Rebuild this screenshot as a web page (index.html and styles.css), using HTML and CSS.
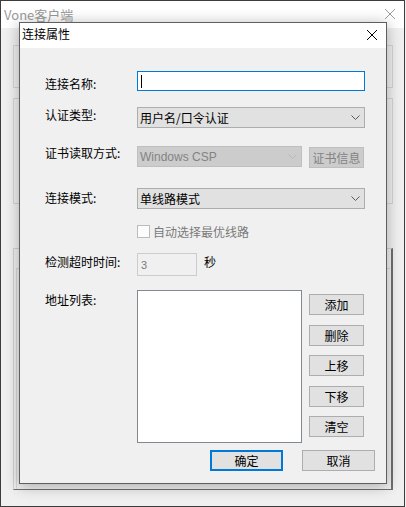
FILE: index.html
```html
<!DOCTYPE html>
<html lang="zh-CN">
<head>
<meta charset="utf-8">
<title>连接属性</title>
<link rel="stylesheet" href="styles.css">
</head>
<body>
<div class="app">
  <div class="app-titlebar">
    <span class="app-title">Vone客户端</span>
    <svg class="app-close" width="10" height="10" viewBox="0 0 10 10"><path d="M0 0L10 10M10 0L0 10" stroke="#9a9a9a" stroke-width="1" fill="none"/></svg>
  </div>
  <div class="app-body">
    <div class="group g1"></div>
    <div class="group g2"></div>
    <div class="group g3"><div class="g3-inner"></div></div>
  </div>

  <div class="dialog">
    <div class="dlg-titlebar">
      <span class="dlg-title">连接属性</span>
      <svg class="dlg-close" width="10" height="10" viewBox="0 0 10 10"><path d="M0 0L10 10M10 0L0 10" stroke="#000" stroke-width="1" fill="none"/></svg>
    </div>
    <div class="dlg-body">
      <div class="row r1">
        <span class="lbl off7">连接名称:</span>
        <div class="field text-input focused"><span class="caret"></span></div>
      </div>
      <div class="row r2">
        <span class="lbl off2">认证类型:</span>
        <div class="field combo wide"><span class="combo-text">用户名/口令认证</span><svg class="chev" width="9" height="5" viewBox="0 0 9 5"><path d="M0.5 0.5L4.5 4.5L8.5 0.5" stroke="#5a5a5a" fill="none"/></svg></div>
      </div>
      <div class="row r3">
        <span class="lbl off1">证书读取方式:</span>
        <div class="field combo narrow disabled"><span class="combo-text">Windows CSP</span><svg class="chev" width="9" height="5" viewBox="0 0 9 5"><path d="M0.5 0.5L4.5 4.5L8.5 0.5" stroke="#b8b8b8" fill="none"/></svg></div>
        <div class="btn side disabled cert">证书信息</div>
      </div>
      <div class="row r4">
        <span class="lbl off4">连接模式:</span>
        <div class="field combo wide"><span class="combo-text">单线路模式</span><svg class="chev" width="9" height="5" viewBox="0 0 9 5"><path d="M0.5 0.5L4.5 4.5L8.5 0.5" stroke="#5a5a5a" fill="none"/></svg></div>
      </div>
      <div class="row r5">
        <span class="lbl"></span>
        <span class="checkbox"></span>
        <span class="check-text">自动选择最优线路</span>
      </div>
      <div class="row r6">
        <span class="lbl off3">检测超时时间:</span>
        <div class="field timeout"><span class="timeout-val">3</span></div>
        <span class="unit">秒</span>
      </div>
      <div class="row r7">
        <span class="lbl off4">地址列表:</span>
        <div class="listbox"></div>
        <div class="side-buttons">
          <div class="btn side">添加</div>
          <div class="btn side">删除</div>
          <div class="btn side">上移</div>
          <div class="btn side">下移</div>
          <div class="btn side">清空</div>
        </div>
      </div>
      <div class="row r8">
        <div class="btn action default">确定</div>
        <div class="btn action">取消</div>
      </div>
    </div>
  </div>
</div>
</body>
</html>
```

FILE: styles.css
```css
* { box-sizing: border-box; }
html, body { margin: 0; padding: 0; }
body {
  width: 406px;
  height: 507px;
  overflow: hidden;
  background: #f0f0f0;
  font-family: "Noto Sans CJK SC", "Noto Sans", sans-serif;
  font-size: 12px;
  line-height: 12px;
  color: #000;
}

/* parent window */
.app {
  position: relative;
  width: 405px;
  height: 507px;
  border: 1px solid #3d3d3d;
  background: #f0f0f0;
  display: flex;
  flex-direction: column;
}
.app-titlebar {
  height: 27px;
  background: #fff;
  display: flex;
  align-items: flex-start;
  padding: 7px 0 0 3px;
}
.app-title {
  font-size: 13px;
  line-height: 13px;
  color: #9a9a9a;
  flex: 1;
}
.app-close { margin: 1px 9px 0 0; }
.app-body {
  flex: 1;
  padding: 17px 0 0 12px;
  display: flex;
  flex-direction: column;
}
.group {
  width: 380px;
  border: 1px solid #d6d6d6;
}
.g1 { height: 43px; }
.g2 { height: 106px; margin-top: 10px; }
.g3 {
  height: 242px;
  margin-top: 44px;
  border-color: #d2d2d2 #6f6f6f #6f6f6f #d2d2d2;
  border-right-width: 2px;
  padding: 19px 1px 0 2px;
}
.g3-inner {
  height: 100%;
  border-top: 1px solid #d8d8d8;
  border-left: 1px solid #d8d8d8;
}

/* dialog */
.dialog {
  position: absolute;
  left: 18px;
  top: 21px;
  width: 368px;
  height: 462px;
  border: 1px solid #5f5f5f;
  background: #f0f0f0;
  box-shadow: 0 2px 14px rgba(0, 0, 0, 0.3);
  display: flex;
  flex-direction: column;
}
.dlg-titlebar {
  height: 25px;
  background: #fff;
  display: flex;
  align-items: flex-start;
  padding: 5px 0 0 2px;
}
.dlg-title { flex: 1; }
.dlg-close { margin: 2px 9px 0 0; shape-rendering: crispEdges; }
.dlg-body {
  flex: 1;
  padding: 23px 0 0 25px;
  display: flex;
  flex-direction: column;
}

.row { display: flex; align-items: flex-start; }
.r2 { margin-top: 16px; }
.r3 { margin-top: 18px; }
.r4 { margin-top: 20px; }
.r5 { margin-top: 16px; }
.r6 { margin-top: 15px; }
.r7 { margin-top: 14px; }
.r8 { margin-top: 7px; justify-content: flex-end; padding-right: 11px; gap: 19px; }

.lbl { width: 92px; flex: none; white-space: nowrap; }
.off1 { margin-top: 1px; }
.off2 { margin-top: 2px; }
.off3 { margin-top: 3px; }
.off4 { margin-top: 4px; }
.off7 { margin-top: 7px; }

.field { flex: none; border: 1px solid #adadad; display: flex; align-items: center; }
.text-input {
  width: 228px;
  height: 20px;
  background: #fff;
  padding-left: 3px;
}
.text-input.focused { border-color: #0078d7; }
.caret { width: 1px; height: 13px; background: #000; }

.combo {
  height: 21px;
  background: #e1e1e1;
  padding: 0 4px 0 2px;
}
.combo.wide { width: 228px; }
.combo.narrow { width: 165px; }
.combo-text { flex: 1; padding-top: 1px; }
.combo.disabled { background: #cccccc; border-color: #bfbfbf; color: #838383; font-family: "Liberation Sans", "Noto Sans", sans-serif; font-size: 12px; }
.chev { flex: none; }

.btn {
  height: 21px;
  border: 1px solid #adadad;
  background: #e1e1e1;
  display: flex;
  align-items: center;
  justify-content: center;
  padding-top: 1px;
}
.btn.side { width: 55px; }
.btn.cert { margin: 1px 0 0 7px; }
.btn.disabled { background: #cccccc; border-color: #bfbfbf; color: #838383; }
.btn.action { width: 73px; }
.btn.default { border: 2px solid #0078d7; }

.checkbox {
  width: 13px;
  height: 13px;
  border: 1px solid #bcbcbc;
  background: #fcfcfc;
  flex: none;
}
.check-text { margin: 1px 0 0 3px; color: #7a7a7a; }

.timeout {
  width: 60px;
  height: 23px;
  background: #f0f0f0;
  border-color: #cccccc;
  padding-left: 3px;
  align-items: flex-start;
}
.timeout-val { color: #7a7a7a; font-family: "Liberation Sans", sans-serif; font-size: 11px; margin-top: 5px; }
.unit { margin: 3px 0 0 7px; }

.listbox {
  width: 165px;
  height: 153px;
  background: #fff;
  border: 1px solid #828790;
  flex: none;
}
.side-buttons {
  margin: 4px 0 0 7px;
  display: flex;
  flex-direction: column;
  gap: 9.5px;
}
```
